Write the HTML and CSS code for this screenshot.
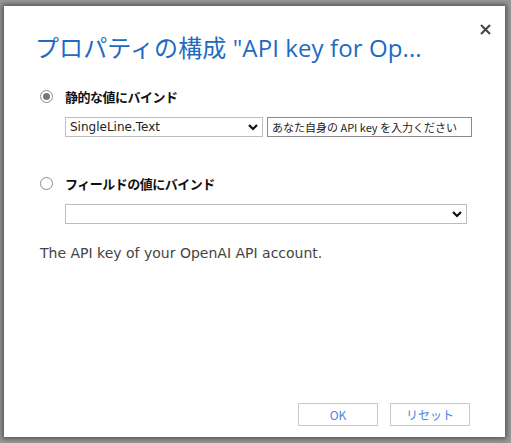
FILE: index.html
```html
<!DOCTYPE html>
<html lang="ja">
<head>
<meta charset="utf-8">
<title>プロパティの構成</title>
<link rel="stylesheet" href="styles.css">
</head>
<body>
<div class="dialog">
  <div class="header">
    <h1 class="title">プロパティの構成 "API key for Op...</h1>
    <span class="close">
      <svg width="11" height="11" viewBox="0 0 11 11"><path d="M1 1L10 10M10 1L1 10" stroke="#444" stroke-width="2"/></svg>
    </span>
  </div>
  <div class="body">
    <div class="option">
      <span class="radio checked"></span>
      <span class="label">静的な値にバインド</span>
    </div>
    <div class="controls">
      <div class="select select-short"><span>SingleLine.Text</span><svg class="chev" width="10" height="7" viewBox="0 0 10 7"><path d="M1 1L5 5L9 1" fill="none" stroke="#111" stroke-width="2.2"/></svg></div>
      <div class="input">あなた自身の API key を入力ください</div>
    </div>
    <div class="option option2">
      <span class="radio"></span>
      <span class="label">フィールドの値にバインド</span>
    </div>
    <div class="controls">
      <div class="select select-long"><span></span><svg class="chev" width="10" height="7" viewBox="0 0 10 7"><path d="M1 1L5 5L9 1" fill="none" stroke="#111" stroke-width="2.2"/></svg></div>
    </div>
    <p class="desc">The API key of your OpenAI API account.</p>
  </div>
  <div class="footer">
    <button class="btn">OK</button>
    <button class="btn">リセット</button>
  </div>
</div>
</body>
</html>
```
FILE: styles.css
```css
html, body {
  margin: 0;
  padding: 0;
}
body {
  width: 511px;
  height: 443px;
  background: #9a9a9a;
  padding: 6px 6px 6px 4px;
  box-sizing: border-box;
  font-family: "Noto Sans CJK JP", sans-serif;
}
.dialog {
  width: 501px;
  height: 431px;
  background: #fff;
  box-shadow: 0 0 5px 2px rgba(0,0,0,0.45);
  display: flex;
  flex-direction: column;
  box-sizing: border-box;
}
.header {
  display: flex;
  justify-content: space-between;
  align-items: flex-start;
  padding: 18px 14px 0 31px;
}
.title {
  margin: 8px 0 0 0;
  font-family: "Open Sans", "Noto Sans CJK JP", sans-serif;
  font-weight: 400;
  font-size: 24px;
  line-height: 32px;
  color: #1e6bc2;
  letter-spacing: 0.1px;
}
.close {
  display: block;
  width: 11px;
  height: 11px;
  margin-top: 0;
}
.close svg {
  display: block;
}
.body {
  padding: 22px 0 0 36px;
  flex: 1;
}
.option {
  display: flex;
  align-items: center;
  height: 20px;
}
.option2 {
  margin-top: 36px;
}
.radio {
  width: 11px;
  height: 11px;
  border: 1px solid #8a8a8a;
  border-radius: 50%;
  box-sizing: content-box;
  position: relative;
  margin-right: 12px;
}
.radio.checked::after {
  content: "";
  position: absolute;
  left: 2px;
  top: 2px;
  width: 7px;
  height: 7px;
  border-radius: 50%;
  background: #777;
}
.label {
  font-weight: 700;
  font-size: 13px;
  color: #111;
  letter-spacing: -0.5px;
}
.controls {
  display: flex;
  align-items: center;
  margin: 11px 0 0 25px;
  gap: 4px;
}
.select {
  height: 20px;
  border: 1px solid #bdbdbd;
  box-sizing: border-box;
  display: flex;
  align-items: center;
  justify-content: space-between;
  padding: 0 4px 0 4px;
  font-family: "DejaVu Sans", sans-serif;
  font-size: 12px;
  color: #222;
}
.select-short { width: 198px; }
.select-long { width: 402px; }
.input {
  width: 205px;
  height: 20px;
  border: 1px solid #8a8a8a;
  box-sizing: border-box;
  font-size: 11px;
  line-height: 18px;
  padding-left: 4px;
  color: #222;
  white-space: nowrap;
  overflow: hidden;
}
.desc {
  margin: 21px 0 0 0;
  font-family: "DejaVu Sans", sans-serif;
  font-size: 14px;
  color: #444;
}
.footer {
  display: flex;
  justify-content: flex-end;
  gap: 12px;
  padding: 0 35px 11px 0;
}
.btn {
  width: 80px;
  height: 23px;
  border: 1px solid #c8c8c8;
  background: #fff;
  color: #4a86dc;
  font-family: "Noto Sans CJK JP", sans-serif;
  font-size: 12px;
  padding: 0;
}
```
